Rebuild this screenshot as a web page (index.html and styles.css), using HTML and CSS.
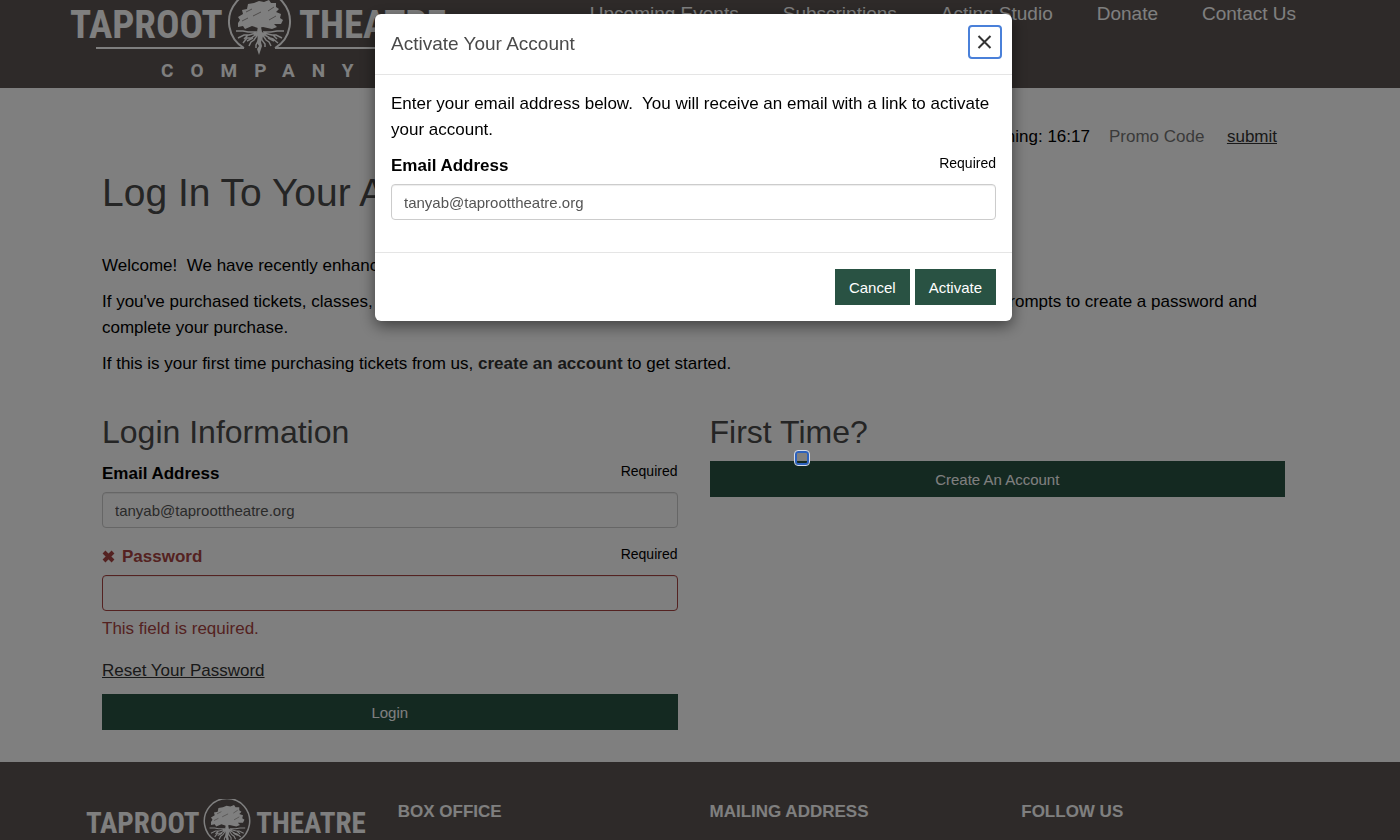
FILE: index.html
```html
<!DOCTYPE html>
<html lang="en">
<head>
    <meta charset="UTF-8">
    <meta name="viewport" content="width=device-width, initial-scale=1.0">
    <title>Log In To Your Account</title>
    <link rel="stylesheet" href="styles.css">
</head>
<body class="modal-open">
    <!-- Logo, shared by the header and the footer -->
    <svg class="sprite" aria-hidden="true">
        <defs>
            <g id="logo">
                <text class="logo-name" x="0" y="46">TAPROOT</text>
                <text class="logo-name" x="376" y="46" text-anchor="end">THEATRE</text>
                <path class="logo-line" d="M26 56H174M205 56H350"/>
                <path class="logo-ring" d="M174 56A30.5 30.5 0 1 1 205 56"/>
                <path class="logo-leaves" d="M168 31l2-3-2-3 5-3-1-4 5-1 1-5 6-1 5-2 5 1 5-2 2 3 5 0 0 4 3 2-3 3 5 2-1 4 3 2-2 4-7 0 3 3-5 2-9-2-5 1-6-2-7 3-2-3-5 1z"/>
                <path class="logo-gaps" d="M176 20l6-3M183 24l8-4M198 19l6-4M172 29l6-3M199 28l7-4"/>
                <path class="logo-trunk" d="M185 28l3 6-1 6-4 3h14l-5-3-1-5 4-6z"/>
                <path class="logo-roots" d="M187 40l-9 0-5-1-7 0M193 40l8 0 6-1 7 0M186 41l-7 2-5 0-6 3M194 41l8 2 4 0 6 3M187 42l-6 4-4 0-4 5M193 42l7 4 3 1 5 4M188 42l-4 6-3 2-2 4M192 42l4 6 3 2 2 4M189 42l-1 7-2 4 0 3M191 42l1 6 3 4 0 3M178 43l-4 4M203 43l4 4M183 46l-6 3M198 46l6 3"/>
                <path class="logo-taproot" d="M187 41l1 6-1 4 2 3-2 3 2 6 2-6 1-3-1-4 3-9z"/>
                <text class="logo-company" x="91" y="85">COMPANY</text>
            </g>
        </defs>
    </svg>

    <header class="header">
        <div class="container header-row">
            <a href="#" class="header-logo" aria-label="Taproot Theatre Company">
                <svg width="376" height="80" viewBox="0 8 376 80"><use href="#logo"/></svg>
            </a>
            <nav class="nav">
                <a href="#">Upcoming Events</a>
                <a href="#">Subscriptions</a>
                <a href="#">Acting Studio</a>
                <a href="#">Donate</a>
                <a href="#">Contact Us</a>
            </nav>
        </div>
    </header>

    <main class="main">
        <div class="container content">
            <form class="promo">
                <span>Time Remaining: 16:17</span>
                <input type="text" placeholder="Promo Code" aria-label="Promo Code">
                <a href="#">submit</a>
            </form>

            <h1>Log In To Your Account</h1>

            <p>Welcome!&nbsp; We have recently enhanced our ticketing system.</p>
            <p>If you've purchased tickets, classes, or made a donation already, please enter your email address above and follow the prompts to create a password and complete your purchase.</p>
            <p>If this is your first time purchasing tickets from us, <a href="#" class="strong-link">create an account</a> to get started.</p>

            <div class="columns">
                <form class="column">
                    <h2>Login Information</h2>
                    <div class="form-group">
                        <div class="label-row">
                            <label for="loginEmail">Email Address</label>
                            <span class="required">Required</span>
                        </div>
                        <input type="email" id="loginEmail" class="form-control" value="tanyab@taproottheatre.org">
                    </div>
                    <div class="form-group has-error">
                        <div class="label-row">
                            <label for="loginPassword">
                                <svg class="error-icon" width="13" height="13" viewBox="0 0 13 13" aria-hidden="true"><path d="M2 2l9 9M11 2l-9 9"/></svg>Password</label>
                            <span class="required">Required</span>
                        </div>
                        <input type="password" id="loginPassword" class="form-control">
                        <div class="help">This field is required.</div>
                    </div>
                    <a href="#" class="reset">Reset Your Password</a>
                    <button type="button" class="btn btn-block">Login</button>
                </form>
                <div class="column">
                    <h2>First Time?</h2>
                    <button type="button" class="btn btn-block">Create An Account</button>
                </div>
            </div>
        </div>
    </main>

    <footer class="footer">
        <div class="container footer-row">
            <div class="footer-col">
                <svg class="footer-logo" viewBox="0 0 376 90" role="img" aria-label="Taproot Theatre Company"><use href="#logo"/></svg>
            </div>
            <div class="footer-col"><h3>BOX OFFICE</h3></div>
            <div class="footer-col"><h3>MAILING ADDRESS</h3></div>
            <div class="footer-col"><h3>FOLLOW US</h3></div>
        </div>
    </footer>

    <div class="backdrop"></div>
    <div class="modal-wrap">
        <form class="modal" role="dialog" aria-modal="true" aria-labelledby="modalTitle">
            <div class="modal-header">
                <h4 id="modalTitle">Activate Your Account</h4>
                <button type="button" class="close" aria-label="Close">
                    <svg width="16" height="16" viewBox="0 0 16 16"><path d="M1.5 2l12 12M13.5 2l-12 12"/></svg>
                </button>
            </div>
            <div class="modal-body">
                <p>Enter your email address below.&nbsp; You will receive an email with a link to activate your account.</p>
                <div class="form-group">
                    <div class="label-row">
                        <label for="activateEmail">Email Address</label>
                        <span class="required">Required</span>
                    </div>
                    <input type="email" id="activateEmail" class="form-control" value="tanyab@taproottheatre.org">
                </div>
            </div>
            <div class="modal-footer">
                <button type="button" class="btn">Cancel</button>
                <button type="button" class="btn">Activate</button>
            </div>
        </form>
    </div>
    <div class="pointer"></div>
</body>
</html>
```

FILE: styles.css
```css
/* General */
* {
    box-sizing: border-box;
}

body {
    margin: 0;
    font-family: "Liberation Sans", Arial, sans-serif;
    font-size: 17px;
    line-height: 26px;
    color: #000;
    background: #fff;
}

body.modal-open {
    height: 100vh;
    overflow: hidden;
}

p {
    margin: 0 0 10px;
}

h1, h2, h3, h4 {
    margin: 0;
    font-weight: normal;
    color: #4a4a4a;
}

h1 {
    font-size: 39px;
    line-height: 44px;
    margin: 21px 0 38px;
}

h2 {
    font-size: 32px;
    line-height: 36px;
    margin-bottom: 11px;
}

a {
    color: #333;
}

/* room on the right for the hidden scrollbar */
.header, .main, .footer, .modal-wrap {
    padding-right: 13px;
}

.container {
    max-width: 1247px;
    margin: 0 auto;
}

/* Logo */
.sprite {
    position: absolute;
    width: 0;
    height: 0;
}

.logo-name {
    font: bold 39px "Roboto Condensed", Roboto, sans-serif;
    fill: #fff;
}

.logo-company {
    font: bold 19px Roboto, sans-serif;
    letter-spacing: 17px;
    fill: #fff;
}

.logo-line, .logo-ring, .logo-roots {
    fill: none;
    stroke: #fff;
    stroke-width: 2;
}

.logo-roots {
    stroke-width: 1.5;
}

.logo-leaves, .logo-trunk, .logo-taproot {
    fill: #fff;
}

.logo-gaps {
    fill: none;
    stroke: #5c5452;
    stroke-width: 0.6;
}

/* Header */
.header {
    background: #5c5452;
    overflow: hidden;
}

.header-row {
    display: flex;
    justify-content: space-between;
    height: 88px;
}

.nav {
    display: flex;
    gap: 44px;
    padding-right: 21px;
    font-size: 19px;
    line-height: 28px;
}

.nav a {
    color: #fff;
    text-decoration: none;
    white-space: nowrap;
}

/* Main */
.content {
    padding: 36px 32px 32px;
}

.promo {
    display: flex;
    justify-content: flex-end;
    gap: 19px;
    padding-right: 8px;
}

.promo input {
    width: 99px;
    padding: 0;
    border: 0;
    background: none;
    font: inherit;
}

.promo input::placeholder {
    color: #757575;
}

.strong-link {
    font-weight: bold;
    text-decoration: none;
}

.columns {
    display: flex;
    gap: 32px;
    margin-top: 37px;
}

.column {
    flex: 1;
}

/* Forms */
.form-group {
    margin-bottom: 16px;
}

.label-row {
    display: flex;
    justify-content: space-between;
    margin-bottom: 5px;
}

.label-row label {
    font-weight: bold;
}

.required {
    font-size: 14px;
    line-height: 20px;
}

.form-control {
    display: block;
    width: 100%;
    height: 36px;
    padding: 6px 12px;
    border: 1px solid #ccc;
    border-radius: 4px;
    background: #fff;
    box-shadow: inset 0 1px 1px rgba(0, 0, 0, 0.075);
    color: #555;
    font: 15px "Liberation Sans", Arial, sans-serif;
}

.has-error label, .help {
    color: #a94442;
}

.has-error .form-control {
    border-color: #a94442;
}

.error-icon {
    margin-right: 7px;
    vertical-align: -1px;
}

.error-icon path {
    stroke: #a94442;
    stroke-width: 4;
}

.help {
    margin-top: 5px;
}

.reset {
    display: block;
    width: fit-content;
    margin-bottom: 10px;
}

.btn {
    height: 36px;
    padding: 0 13px;
    border: 1px solid #295243;
    background: #295243;
    color: #fff;
    font: 15px "Liberation Sans", Arial, sans-serif;
    cursor: pointer;
}

.btn-block {
    display: block;
    width: 100%;
}

/* Footer */
.footer {
    background: #5c5452;
}

.footer-row {
    display: flex;
    padding-top: 37px;
}

.footer-col {
    flex: 1;
    padding: 0 16px;
}

.footer-col h3 {
    font-size: 17px;
    font-weight: bold;
    color: #fff;
}

.footer-logo {
    display: block;
    width: 100%;
}

/* Modal */
.backdrop {
    position: fixed;
    inset: 0;
    background: rgba(0, 0, 0, 0.5);
}

.modal-wrap {
    position: fixed;
    inset: 0;
    padding-top: 14px;
}

.modal {
    max-width: 637px;
    margin: 0 auto;
    border-radius: 6px;
    background: #fff;
    box-shadow: 0 5px 15px rgba(0, 0, 0, 0.5);
}

.modal-header {
    display: flex;
    align-items: center;
    justify-content: space-between;
    padding: 11px 10px 15px 16px;
    border-bottom: 1px solid #e5e5e5;
}

.modal-header h4 {
    font-size: 19px;
    line-height: 30px;
    padding-top: 4px;
}

.close {
    display: flex;
    align-items: center;
    justify-content: center;
    width: 34px;
    height: 34px;
    padding: 0;
    border: 2px solid #4a80d9;
    border-radius: 4px;
    background: #fff;
}

.close path {
    stroke: #333;
    stroke-width: 2;
}

.modal-body {
    padding: 16px;
}

.modal-footer {
    display: flex;
    justify-content: flex-end;
    gap: 5px;
    padding: 16px;
    border-top: 1px solid #e5e5e5;
}

.pointer {
    position: absolute;
    left: 794px;
    top: 450px;
    width: 16px;
    height: 16px;
    border: 1px solid #d5dcea;
    border-radius: 4px;
    box-shadow: inset 0 0 0 2px #2c61bd;
}
```
